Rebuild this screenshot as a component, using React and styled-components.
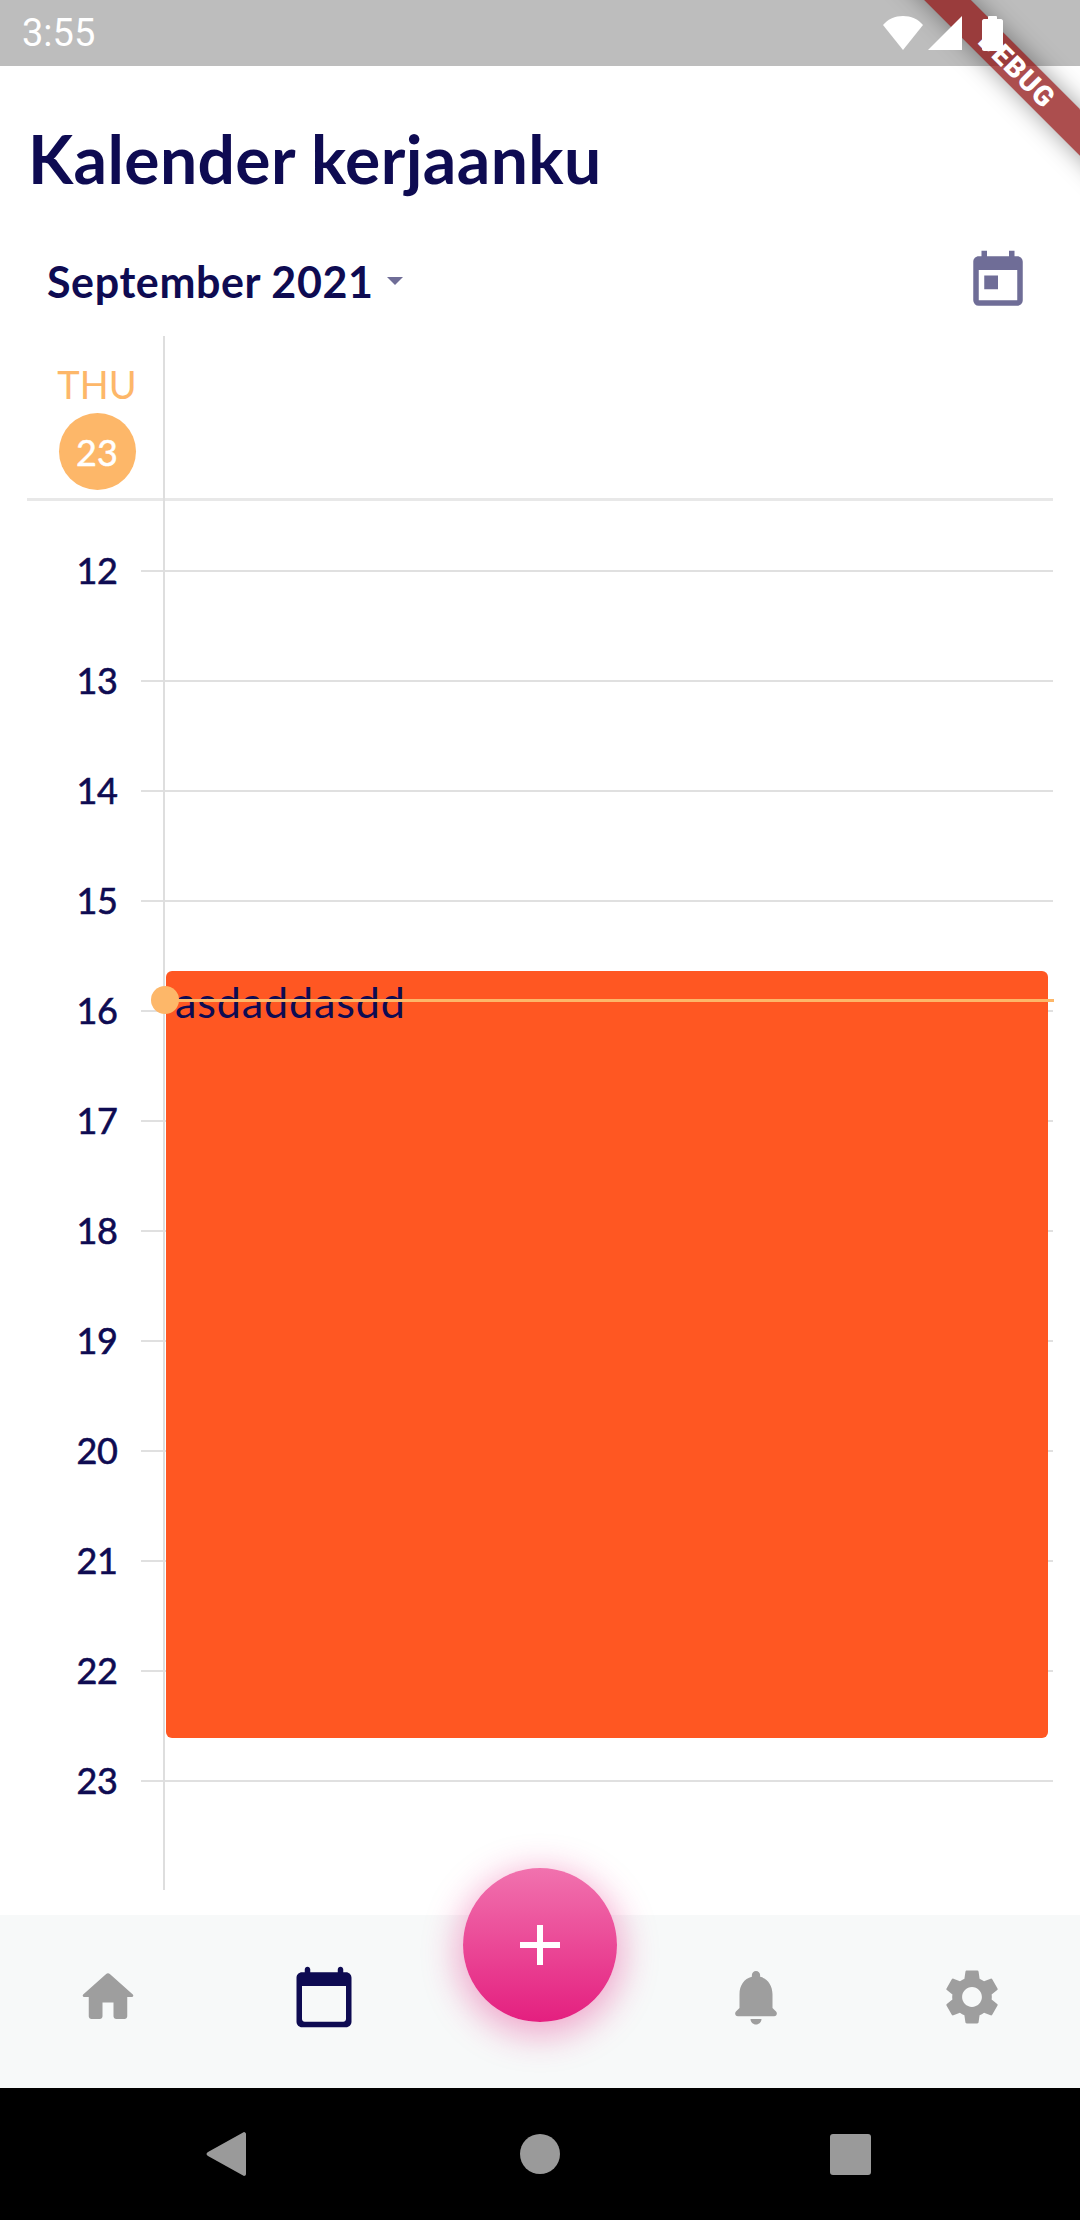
import React from "react";
import styled, { createGlobalStyle } from "styled-components";
import { MdToday, MdSettings } from "react-icons/md";

const navy = "#0e0b52";
const peach = "#fdb769";

const GlobalStyle = createGlobalStyle`
  html, body { margin: 0; padding: 0; background: #fff; }
`;

const Page = styled.div`
  position: relative;
  width: 1080px;
  height: 2220px;
  overflow: hidden;
  display: flex;
  flex-direction: column;
  font-family: "Lato", "Noto Sans", sans-serif;
  color: ${navy};
  background: #fff;
`;

const StatusBar = styled.div`
  height: 66px;
  flex: none;
  background: #bdbdbd;
`;

const StatusInner = styled.div`
  position: relative;
  z-index: 3;
  height: 100%;
  display: flex;
  align-items: center;
  padding: 0 77px 0 22px;
  color: #fff;
`;

const Clock = styled.span`
  font-family: "Roboto", sans-serif;
  font-size: 38px;
  flex: 1;
`;

const StatusIcons = styled.div`
  display: flex;
  align-items: center;
  gap: 5px;
`;

const DebugRibbon = styled.div`
  position: absolute;
  z-index: 2;
  left: 767px;
  top: 53px;
  width: 500px;
  height: 33px;
  transform: rotate(45deg);
  background: rgba(140, 10, 10, 0.72);
  box-shadow: 0 0 24px rgba(0, 0, 0, 0.38);
  color: #fff;
  font-family: "Roboto", sans-serif;
  font-weight: 900;
  font-size: 28px;
  line-height: 33px;
  letter-spacing: 1px;
  text-align: center;
`;

const Title = styled.h1`
  margin: 0;
  padding: 58px 0 0 28px;
  font-size: 66px;
  letter-spacing: 0.4px;
  line-height: 70px;
  font-weight: 700;
`;

const MonthRow = styled.div`
  display: flex;
  align-items: center;
  justify-content: space-between;
  padding: 32px 49px 0 47px;
  height: 110px;
`;

const MonthPicker = styled.div`
  display: flex;
  align-items: center;
  gap: 13px;
  font-size: 43px;
  letter-spacing: 0.6px;
  font-weight: 700;
`;

const Caret = styled.span`
  width: 0;
  height: 0;
  border-left: 8px solid transparent;
  border-right: 8px solid transparent;
  border-top: 8px solid #6f6d97;
`;

const Calendar = styled.div`
  position: relative;
  flex: 1;
  margin: 0 27px 25px 27px;
`;

const VerticalRule = styled.div`
  position: absolute;
  left: 136px;
  top: 0;
  bottom: 0;
  width: 2px;
  background: #dedede;
`;

const DayHeader = styled.div`
  height: 162px;
  width: 140px;
  display: flex;
  flex-direction: column;
  align-items: center;
`;

const DayName = styled.div`
  margin-top: 26px;
  font-size: 38px;
  line-height: 44px;
  color: ${peach};
`;

const DayBadge = styled.div`
  margin-top: 7px;
  width: 77px;
  height: 77px;
  border-radius: 50%;
  background: ${peach};
  color: #fff;
  font-size: 36px;
  -webkit-text-stroke: 0.5px #fff;
  display: flex;
  align-items: center;
  justify-content: center;
`;

const HeaderLine = styled.div`
  height: 3px;
  background: #e8e8e8;
`;

const Hours = styled.div`
  padding-top: 15px;
`;

const HourRow = styled.div`
  height: 110px;
  display: flex;
  align-items: center;
`;

const HourLabel = styled.div`
  width: 88px;
  padding: 0 0 2px 26px;
  text-align: center;
  font-size: 36px;
  letter-spacing: -0.5px;
  -webkit-text-stroke: 0.6px ${navy};
`;

const HourLine = styled.div`
  flex: 1;
  height: 2px;
  background: #e0e0e0;
`;

const EventCard = styled.div`
  position: absolute;
  left: 139px;
  top: 635px;
  width: 882px;
  height: 767px;
  box-sizing: border-box;
  padding: 6px 9px;
  background: #ff5722;
  border-radius: 6px;
  font-size: 43px;
  letter-spacing: 0.9px;
  line-height: 50px;
`;

const NowLine = styled.div`
  position: absolute;
  left: 138px;
  right: -1px;
  top: 663px;
  height: 3px;
  background: ${peach};
`;

const NowDot = styled.div`
  position: absolute;
  left: -14px;
  top: -13px;
  width: 28px;
  height: 28px;
  border-radius: 50%;
  background: ${peach};
`;

const BottomNav = styled.div`
  height: 173px;
  flex: none;
  display: grid;
  grid-template-columns: repeat(5, 216px);
  background: #f7f9f9;
`;

const NavItem = styled.div`
  display: flex;
  align-items: center;
  justify-content: center;
  padding-bottom: 9px;
  color: ${(p) => (p.$active ? navy : "#9e9e9e")};
`;

const Fab = styled.div`
  justify-self: center;
  margin-top: -47px;
  width: 154px;
  height: 154px;
  border-radius: 50%;
  background: linear-gradient(#f172ae, #e41f7f);
  box-shadow: 0 8px 34px 6px rgba(228, 31, 127, 0.36);
  display: flex;
  align-items: center;
  justify-content: center;
`;

const SystemNav = styled.div`
  height: 132px;
  flex: none;
  background: #000;
  display: grid;
  grid-template-columns: repeat(3, 1fr);
  padding: 0 69px;
  align-items: center;
  justify-items: center;
`;

const HomeDot = styled.div`
  width: 40px;
  height: 40px;
  border-radius: 50%;
  background: #9a9a9a;
`;

const RecentSquare = styled.div`
  width: 41px;
  height: 41px;
  margin-right: 7px;
  border-radius: 3px;
  background: #9a9a9a;
`;

const hours = [12, 13, 14, 15, 16, 17, 18, 19, 20, 21, 22, 23];

const Icon = ({ d, size = 66 }) => (
  <svg width={size} height={size} viewBox="0 0 24 24" fill="currentColor">
    <path d={d} />
  </svg>
);

const homePath =
  "M10 19v-5h4v5c0 .55.45 1 1 1h3c.55 0 1-.45 1-1v-7h1.7c.46 0 .68-.57.33-.87L12.67 3.6c-.38-.34-.96-.34-1.34 0l-8.36 7.53c-.34.3-.13.87.33.87H5v7c0 .55.45 1 1 1h3c.55 0 1-.45 1-1z";
const calendarPath =
  "M20 3h-1V2c0-.55-.45-1-1-1s-1 .45-1 1v1H7V2c0-.55-.45-1-1-1s-1 .45-1 1v1H4c-1.1 0-2 .9-2 2v16c0 1.1.9 2 2 2h16c1.1 0 2-.9 2-2V5c0-1.1-.9-2-2-2zm-1 18H5c-.55 0-1-.45-1-1V8h16v12c0 .55-.45 1-1 1z";
const bellPath =
  "M12 22c1.1 0 2-.9 2-2h-4c0 1.1.9 2 2 2zm6-6v-5c0-3.07-1.64-5.64-4.5-6.32V4c0-.83-.67-1.5-1.5-1.5s-1.5.67-1.5 1.5v.68C7.63 5.36 6 7.92 6 11v5l-1.29 1.29c-.63.63-.19 1.71.7 1.71h13.17c.89 0 1.34-1.08.71-1.71L18 16z";

const App = () => (
  <Page>
    <GlobalStyle />
    <StatusBar>
      <StatusInner>
        <Clock>3:55</Clock>
        <StatusIcons>
          <svg width="40" height="34" viewBox="0 0 40 34" fill="#fff">
            <path d="M0 9C5 3 12 0 20 0s15 3 20 9L20 34z" />
          </svg>
          <svg width="34" height="34" viewBox="0 0 34 34" fill="#fff" style={{ marginRight: 15 }}>
            <path d="M34 0v34H0z" />
          </svg>
          <svg width="21" height="35" viewBox="0 0 21 35" fill="#fff">
            <path d="M6 3V1c0-.5.5-1 1-1h7c.5 0 1 .5 1 1v2h4c1 0 2 1 2 2v28c0 1-1 2-2 2H2c-1 0-2-1-2-2V5c0-1 1-2 2-2z" />
          </svg>
        </StatusIcons>
      </StatusInner>
    </StatusBar>
    <DebugRibbon>DEBUG</DebugRibbon>

    <Title>Kalender kerjaanku</Title>
    <MonthRow>
      <MonthPicker>
        September 2021
        <Caret />
      </MonthPicker>
      <MdToday size={66} color="#6f6d97" />
    </MonthRow>

    <Calendar>
      <DayHeader>
        <DayName>THU</DayName>
        <DayBadge>23</DayBadge>
      </DayHeader>
      <HeaderLine />
      <Hours>
        {hours.map((h) => (
          <HourRow key={h}>
            <HourLabel>{h}</HourLabel>
            <HourLine />
          </HourRow>
        ))}
      </Hours>
      <VerticalRule />
      <EventCard>asdaddasdd</EventCard>
      <NowLine>
        <NowDot />
      </NowLine>
    </Calendar>

    <BottomNav>
      <NavItem>
        <Icon d={homePath} />
      </NavItem>
      <NavItem $active>
        <Icon d={calendarPath} />
      </NavItem>
      <Fab>
        <svg width="40" height="40" viewBox="0 0 40 40" fill="#fff">
          <path d="M17 0h6v17h17v6H23v17h-6V23H0v-6h17z" />
        </svg>
      </Fab>
      <NavItem>
        <Icon d={bellPath} />
      </NavItem>
      <NavItem>
        <MdSettings size={66} />
      </NavItem>
    </BottomNav>

    <SystemNav>
      <svg width="40" height="46" viewBox="0 0 40 46" fill="#9a9a9a">
        <path d="M38 1c1 0 2 1 2 2v40c0 1-1 2-2 2L2 25c-2-1-2-3 0-4z" />
      </svg>
      <HomeDot />
      <RecentSquare />
    </SystemNav>
  </Page>
);

export default App;
